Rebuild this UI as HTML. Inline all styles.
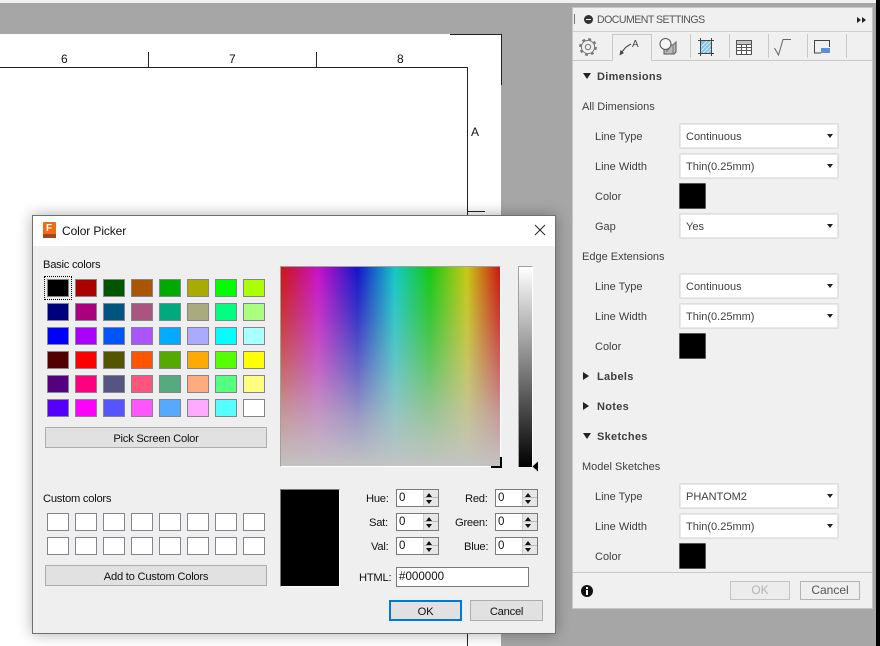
<!DOCTYPE html>
<html><head><meta charset="utf-8"><title>Color Picker</title>
<style>
html,body{margin:0;padding:0}
body{width:880px;height:646px;overflow:hidden;position:relative;background:#a6a6a6;font-family:"Liberation Sans",sans-serif}
div,span{position:absolute;box-sizing:border-box}
.t{white-space:nowrap;line-height:14px;font-size:11px;color:#3f3f3f;margin-top:1px}
.b{font-weight:bold;letter-spacing:.3px}
.d{white-space:nowrap;line-height:14px;font-size:11.2px;color:#111;letter-spacing:-.25px;margin-top:1px}
.sel{left:679px;width:160px;height:26px;background:#fff;border:1px solid #dedede;border-radius:2px;box-shadow:0 0 0 1px #e9e9e9 inset}
.sel span{left:6px;top:6px;font-size:11px;line-height:14px;color:#3f3f3f;white-space:nowrap}
.sel i{position:absolute;right:5px;top:10px;width:0;height:0;border:3.5px solid transparent;border-top:4px solid #222;border-bottom:0}
.blk{left:679px;width:27px;height:26px;background:#000;border:1px solid #555;border-radius:1px}
.tri{width:0;height:0;border-left:4.5px solid transparent;border-right:4.5px solid transparent;border-top:6px solid #222;left:583px}
.trr{width:0;height:0;border-top:4.5px solid transparent;border-bottom:4.5px solid transparent;border-left:6px solid #222;left:583px}
.c{width:22px;height:18px;border:1px solid #84848c;background:#fff}
.s{width:43px;height:18px;border:1px solid #7a7a7a;background:#fff}
.s span{left:2px;top:1px;font-size:11.5px;line-height:14px;color:#111}
.s b{position:absolute;left:26px;top:0;width:14px;height:16px;background:#e6e6e6;border-left:1px solid #ccc}
.s i{position:absolute;left:29px;width:0;height:0;border-left:3.5px solid transparent;border-right:3.5px solid transparent}
.s .u{top:3px;border-bottom:4px solid #111}
.s .w{top:10px;border-top:4px solid #111}
.s em{position:absolute;left:27px;top:7px;width:14px;height:1px;background:#bbb}
.btn{background:#e1e1e1;border:1px solid #adadad;text-align:center;font-size:11.2px;color:#111;letter-spacing:-.25px}
.sep{top:34px;width:1px;height:24px;background:#c9c9c9}
</style></head><body>

<div style="left:0;top:0;width:876px;height:3px;background:#f0f0f0"></div>
<div style="left:876px;top:0;width:4px;height:646px;background:#000"></div>

<!-- sheet -->
<div style="left:0;top:34px;width:501px;height:612px;background:#fff"></div>
<div style="left:450px;top:34px;width:52px;height:1px;background:#222"></div>
<div style="left:501px;top:34px;width:1px;height:51px;background:#222"></div>
<div style="left:0;top:67px;width:468px;height:1px;background:#222"></div>
<div style="left:467px;top:67px;width:1px;height:579px;background:#222"></div>
<div style="left:148px;top:52px;width:1px;height:15px;background:#222"></div>
<div style="left:316px;top:52px;width:1px;height:15px;background:#222"></div>
<div style="left:468px;top:211px;width:17px;height:1px;background:#222"></div>
<div class="t" style="left:61px;top:51px;color:#111;font-size:12px">6</div>
<div class="t" style="left:229px;top:51px;color:#111;font-size:12px">7</div>
<div class="t" style="left:397px;top:51px;color:#111;font-size:12px">8</div>
<div class="t" style="left:471px;top:124px;color:#111;font-size:12px">A</div>

<!-- settings panel -->
<div style="left:572px;top:7px;width:301px;height:602px;background:#f0f0f0;border:1px solid #c6c6c6"></div>
<div style="left:573px;top:31px;width:299px;height:1px;background:#cfcfcf"></div>
<div style="left:573px;top:60px;width:299px;height:1px;background:#c9c9c9"></div>
<div style="left:574px;top:14px;width:1px;height:10px;background:#777"></div>
<div style="left:584px;top:15px;width:9px;height:9px;border-radius:50%;background:#333"></div>
<div style="left:586px;top:19px;width:5px;height:1px;background:#eee"></div>
<div class="t" style="left:597px;top:12px;color:#555;letter-spacing:-.55px;font-size:10.6px">DOCUMENT SETTINGS</div>
<svg style="position:absolute;left:856px;top:16px" width="11" height="8"><path d="M1 1l4 3-4 3zM6 1l4 3-4 3z" fill="#222"/></svg>

<!-- tabs -->
<div style="left:612px;top:34px;width:40px;height:27px;background:#f0f0f0;border:1px solid #c9c9c9;border-bottom:0"></div>
<div class="sep" style="left:690px"></div><div class="sep" style="left:729px"></div><div class="sep" style="left:768px"></div><div class="sep" style="left:807px"></div><div class="sep" style="left:846px"></div>

<svg style="position:absolute;left:578px;top:37px" width="20" height="20" fill="none" stroke="#777"><circle cx="10" cy="10" r="6.6" stroke-width="1"/><circle cx="10" cy="10" r="7.9" stroke-width="2" stroke-dasharray="2.9 3.3"/><circle cx="10" cy="10" r="2.7" stroke-width="1"/></svg>
<svg style="position:absolute;left:618px;top:38px" width="28" height="18" fill="none" stroke="#444"><path d="M3 15l5-6 5-3" stroke-width="1.1"/><path d="M1.500 17.500l1-5.500 3.500 3z" fill="#444" stroke="none"/><text x="14" y="9" font-family="Liberation Sans,sans-serif" font-size="10" fill="#444" stroke="none">A</text></svg>
<svg style="position:absolute;left:658px;top:37px" width="20" height="19" fill="none" stroke="#555"><path d="M6 8h9l3-3v10l-2 2H6z" fill="#b8b8b8"/><path d="M15 8v9M15 8l3-3M8 15l3-3" stroke="#777"/><circle cx="7.500" cy="7" r="5.500" fill="#f4f4f4"/></svg>
<svg style="position:absolute;left:698px;top:38px" width="16" height="18" fill="none"><rect x="3" y="3" width="10" height="12" fill="#7cc0e4"/><path d="M3 9l6-6M3 13l10-10M5 15l8-8M9 15l4-4" stroke="#d8eef8"/><path d="M0 2.500h16M0 15.500h16M2.500 0v18M13.500 0v18" stroke="#444"/></svg>
<svg style="position:absolute;left:736px;top:40px" width="17" height="15" fill="none"><rect x=".5" y=".5" width="15" height="14" fill="#fff" stroke="#555"/><rect x="1" y="1" width="14" height="3.500" fill="#c4c4c4"/><path d="M1 4.500h15M1 7.500h15M1 10.500h15M5.500 4.500v10M10.500 4.500v10" stroke="#555"/></svg>
<svg style="position:absolute;left:774px;top:38px" width="18" height="18" fill="none" stroke="#666"><path d="M.5 10l4 7L9 1.500h8" stroke-width="1"/></svg>
<svg style="position:absolute;left:814px;top:39px" width="18" height="16" fill="none"><path d="M15.500 8V1.500H.5v12.500h6.500" stroke="#444" stroke-width="1"/><rect x="7" y="9" width="9" height="5" fill="#5b8fd6"/></svg>

<!-- rows -->
<div class="tri" style="top:73px"></div>
<div class="t b" style="left:597px;top:69px">Dimensions</div>
<div class="t" style="left:582px;top:99px">All Dimensions</div>
<div class="t" style="left:595px;top:129px">Line Type</div>
<div class="sel" style="top:123px"><span>Continuous</span><i></i></div>
<div class="t" style="left:595px;top:159px">Line Width</div>
<div class="sel" style="top:153px"><span>Thin(0.25mm)</span><i></i></div>
<div class="t" style="left:595px;top:189px">Color</div>
<div class="blk" style="top:183px"></div>
<div class="t" style="left:595px;top:219px">Gap</div>
<div class="sel" style="top:213px"><span>Yes</span><i></i></div>
<div class="t" style="left:582px;top:249px">Edge Extensions</div>
<div class="t" style="left:595px;top:279px">Line Type</div>
<div class="sel" style="top:273px"><span>Continuous</span><i></i></div>
<div class="t" style="left:595px;top:309px">Line Width</div>
<div class="sel" style="top:303px"><span>Thin(0.25mm)</span><i></i></div>
<div class="t" style="left:595px;top:339px">Color</div>
<div class="blk" style="top:333px"></div>
<div class="trr" style="top:372px"></div>
<div class="t b" style="left:597px;top:369px">Labels</div>
<div class="trr" style="top:402px"></div>
<div class="t b" style="left:597px;top:399px">Notes</div>
<div class="tri" style="top:433px"></div>
<div class="t b" style="left:597px;top:429px">Sketches</div>
<div class="t" style="left:582px;top:459px">Model Sketches</div>
<div class="t" style="left:595px;top:489px">Line Type</div>
<div class="sel" style="top:483px"><span>PHANTOM2</span><i></i></div>
<div class="t" style="left:595px;top:519px">Line Width</div>
<div class="sel" style="top:513px"><span>Thin(0.25mm)</span><i></i></div>
<div class="t" style="left:595px;top:549px">Color</div>
<div class="blk" style="top:543px"></div>
<div style="left:573px;top:572px;width:299px;height:1px;background:#c9c9c9"></div>
<div style="left:581px;top:585px;width:12px;height:12px;border-radius:50%;background:#111"></div>
<div style="left:586px;top:587px;width:2px;height:2px;background:#fff"></div>
<div style="left:586px;top:590px;width:2px;height:5px;background:#fff"></div>
<div style="left:730px;top:581px;width:60px;height:19px;background:#ececec;border:1px solid #c4c4c4;color:#b4b4b4;font-size:12px;line-height:17px;text-align:center">OK</div>
<div style="left:800px;top:581px;width:60px;height:19px;background:#efefef;border:1px solid #b4b4b4;color:#555;font-size:12px;line-height:17px;text-align:center">Cancel</div>

<!-- dialog -->
<div style="left:32px;top:215px;width:524px;height:419px;background:#efefef;border:1px solid #707070;box-shadow:0 0 14px rgba(0,0,0,.32)"></div>
<div style="left:33px;top:216px;width:522px;height:30px;background:#fff"></div>
<div style="left:43px;top:222px;width:13px;height:16px;background:#f26b12;border-radius:1px"></div>
<div style="left:43px;top:234px;width:13px;height:4px;background:#9a4a1c"></div>
<div style="left:46px;top:223px;color:#fff;font-size:10px;font-weight:bold;line-height:11px">F</div>
<div class="d" style="left:62px;top:223px;font-size:12px;letter-spacing:-.1px">Color Picker</div>
<svg style="position:absolute;left:534px;top:224px" width="12" height="12" fill="none" stroke="#222"><path d="M1 1l10 10M11 1L1 11"/></svg>

<div class="d" style="left:43px;top:257px">Basic colors</div>
<div style="left:44px;top:276px;width:28px;height:24px;border:1px dotted #000"></div>

<div class="c" style="left:47px;top:279px;background:#000"></div><div class="c" style="left:75px;top:279px;background:#a00"></div><div class="c" style="left:103px;top:279px;background:#050"></div><div class="c" style="left:131px;top:279px;background:#a50"></div><div class="c" style="left:159px;top:279px;background:#0a0"></div><div class="c" style="left:187px;top:279px;background:#aa0"></div><div class="c" style="left:215px;top:279px;background:#0f0"></div><div class="c" style="left:243px;top:279px;background:#af0"></div>
<div class="c" style="left:47px;top:303px;background:#00007f"></div><div class="c" style="left:75px;top:303px;background:#aa007f"></div><div class="c" style="left:103px;top:303px;background:#00557f"></div><div class="c" style="left:131px;top:303px;background:#aa557f"></div><div class="c" style="left:159px;top:303px;background:#00aa7f"></div><div class="c" style="left:187px;top:303px;background:#aaaa7f"></div><div class="c" style="left:215px;top:303px;background:#00ff7f"></div><div class="c" style="left:243px;top:303px;background:#aaff7f"></div>
<div class="c" style="left:47px;top:327px;background:#00f"></div><div class="c" style="left:75px;top:327px;background:#a0f"></div><div class="c" style="left:103px;top:327px;background:#05f"></div><div class="c" style="left:131px;top:327px;background:#a5f"></div><div class="c" style="left:159px;top:327px;background:#0af"></div><div class="c" style="left:187px;top:327px;background:#aaf"></div><div class="c" style="left:215px;top:327px;background:#0ff"></div><div class="c" style="left:243px;top:327px;background:#aff"></div>
<div class="c" style="left:47px;top:351px;background:#500"></div><div class="c" style="left:75px;top:351px;background:#f00"></div><div class="c" style="left:103px;top:351px;background:#550"></div><div class="c" style="left:131px;top:351px;background:#f50"></div><div class="c" style="left:159px;top:351px;background:#5a0"></div><div class="c" style="left:187px;top:351px;background:#fa0"></div><div class="c" style="left:215px;top:351px;background:#5f0"></div><div class="c" style="left:243px;top:351px;background:#ff0"></div>
<div class="c" style="left:47px;top:375px;background:#55007f"></div><div class="c" style="left:75px;top:375px;background:#ff007f"></div><div class="c" style="left:103px;top:375px;background:#55557f"></div><div class="c" style="left:131px;top:375px;background:#ff557f"></div><div class="c" style="left:159px;top:375px;background:#55aa7f"></div><div class="c" style="left:187px;top:375px;background:#ffaa7f"></div><div class="c" style="left:215px;top:375px;background:#55ff7f"></div><div class="c" style="left:243px;top:375px;background:#ffff7f"></div>
<div class="c" style="left:47px;top:399px;background:#50f"></div><div class="c" style="left:75px;top:399px;background:#f0f"></div><div class="c" style="left:103px;top:399px;background:#55f"></div><div class="c" style="left:131px;top:399px;background:#f5f"></div><div class="c" style="left:159px;top:399px;background:#5af"></div><div class="c" style="left:187px;top:399px;background:#faf"></div><div class="c" style="left:215px;top:399px;background:#5ff"></div><div class="c" style="left:243px;top:399px;background:#fff"></div>

<div class="btn" style="left:45px;top:427px;width:222px;height:21px;line-height:22px">Pick Screen Color</div>

<div class="d" style="left:43px;top:491px">Custom colors</div>
<div class="c" style="left:47px;top:513px"></div><div class="c" style="left:75px;top:513px"></div><div class="c" style="left:103px;top:513px"></div><div class="c" style="left:131px;top:513px"></div><div class="c" style="left:159px;top:513px"></div><div class="c" style="left:187px;top:513px"></div><div class="c" style="left:215px;top:513px"></div><div class="c" style="left:243px;top:513px"></div>
<div class="c" style="left:47px;top:537px"></div><div class="c" style="left:75px;top:537px"></div><div class="c" style="left:103px;top:537px"></div><div class="c" style="left:131px;top:537px"></div><div class="c" style="left:159px;top:537px"></div><div class="c" style="left:187px;top:537px"></div><div class="c" style="left:215px;top:537px"></div><div class="c" style="left:243px;top:537px"></div>
<div class="btn" style="left:45px;top:565px;width:222px;height:21px;line-height:22px">Add to Custom Colors</div>

<!-- spectrum -->
<div style="left:280px;top:266px;width:221px;height:201px;border-top:1px solid #a0a0a0;border-left:1px solid #a0a0a0;border-right:1px solid #fff;border-bottom:1px solid #fff;background:linear-gradient(to bottom,rgba(195,195,195,0) 0%,rgba(195,195,195,.2) 25%,rgba(195,195,195,.46) 50%,rgba(195,195,195,.76) 75%,rgba(195,195,195,1) 100%),linear-gradient(to right,#cc1414 0%,#c810c8 17%,#1414c8 35%,#14c8c8 52%,#14c814 68%,#c8c814 85%,#cc1414 100%)"></div>
<div style="left:491px;top:466px;width:11px;height:2px;background:#000"></div>
<div style="left:500px;top:457px;width:2px;height:11px;background:#000"></div>
<div style="left:518px;top:266px;width:15px;height:201px;border-top:1px solid #a0a0a0;border-left:1px solid #a0a0a0;border-right:1px solid #fff;background:linear-gradient(to bottom,#fff,#000)"></div>
<svg style="position:absolute;left:532px;top:461px" width="7" height="11"><path d="M6 .5v10L.5 5.500z" fill="#000"/></svg>

<!-- preview -->
<div style="left:280px;top:489px;width:60px;height:98px;background:#000;border:1px solid #777;border-right-color:#fff;border-bottom-color:#fff"></div>

<div class="d" style="left:366px;top:491px">Hue:</div>
<div class="d" style="left:369px;top:515px">Sat:</div>
<div class="d" style="left:371px;top:539px">Val:</div>
<div class="d" style="left:465px;top:491px">Red:</div>
<div class="d" style="left:455px;top:515px">Green:</div>
<div class="d" style="left:464px;top:539px">Blue:</div>
<div class="d" style="left:359px;top:570px">HTML:</div>

<div class="s" style="left:396px;top:489px"><span>0</span><b></b><em></em><i class="u"></i><i class="w"></i></div>
<div class="s" style="left:396px;top:513px"><span>0</span><b></b><em></em><i class="u"></i><i class="w"></i></div>
<div class="s" style="left:396px;top:537px"><span>0</span><b></b><em></em><i class="u"></i><i class="w"></i></div>
<div class="s" style="left:495px;top:489px"><span>0</span><b></b><em></em><i class="u"></i><i class="w"></i></div>
<div class="s" style="left:495px;top:513px"><span>0</span><b></b><em></em><i class="u"></i><i class="w"></i></div>
<div class="s" style="left:495px;top:537px"><span>0</span><b></b><em></em><i class="u"></i><i class="w"></i></div>

<div style="left:396px;top:567px;width:133px;height:20px;background:#fff;border:1px solid #7a7a7a"></div>
<div class="d" style="left:399px;top:569px;font-size:11.6px;letter-spacing:0">#000000</div>

<div class="btn" style="left:389px;top:600px;width:73px;height:21px;border:2px solid #0078d7;line-height:20px">OK</div>
<div class="btn" style="left:470px;top:600px;width:73px;height:21px;line-height:22px">Cancel</div>

</body></html>
